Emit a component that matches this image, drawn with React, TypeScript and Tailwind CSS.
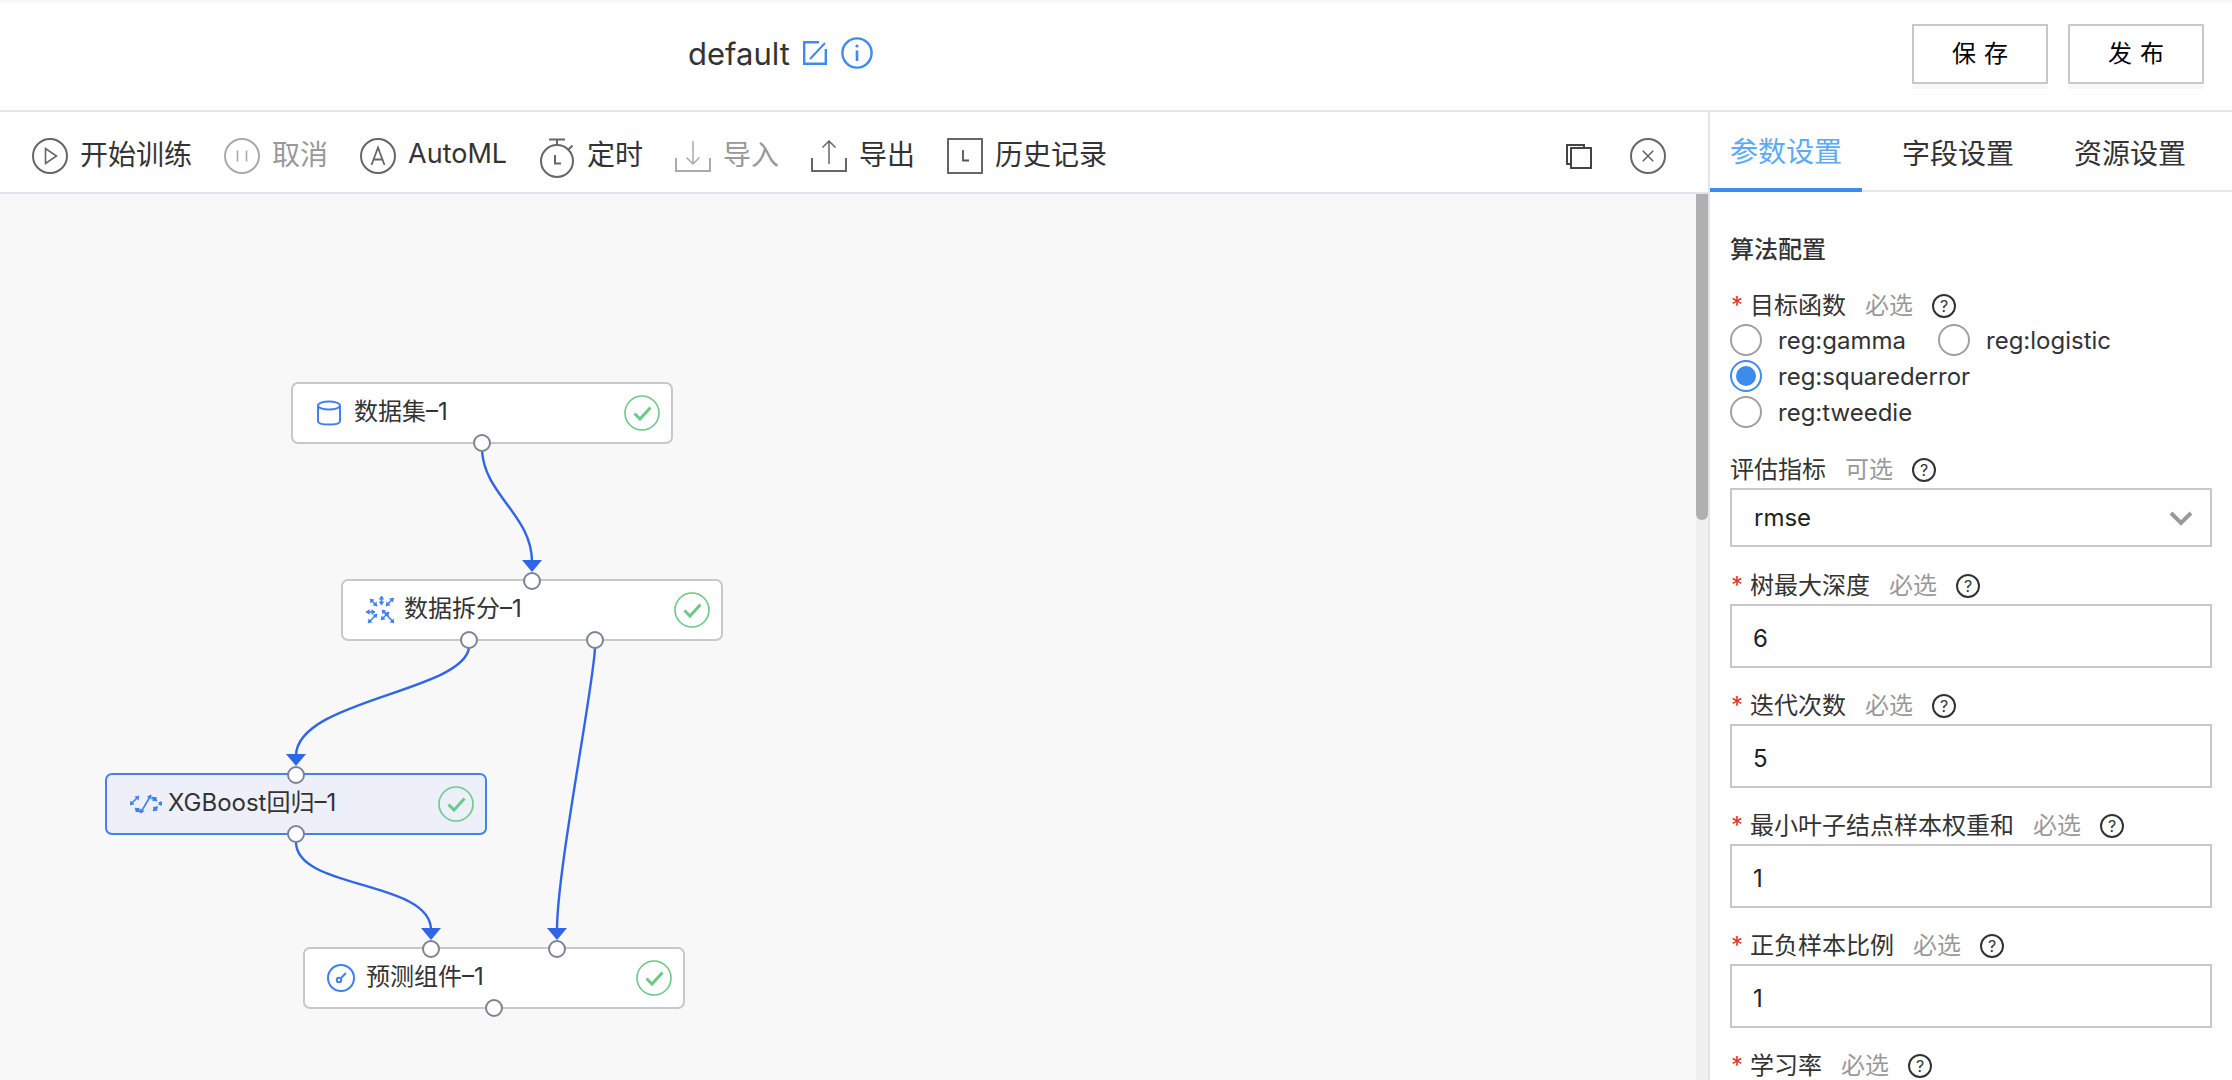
import React from 'react';

const BLUE = '#2f66e8';
const ICON_BLUE = '#3f7ff0';

const font = 'font-[Inter,"Noto_Sans_CJK_SC",sans-serif]';

const PlayIcon = () => (
  <svg width="36" height="36" viewBox="0 0 36 36" fill="none" stroke="#666" strokeWidth="2">
    <circle cx="18" cy="18" r="17" />
    <path d="M13.5 10.5v15l11-7.5z" strokeWidth="1.6" />
  </svg>
);

const PauseIcon = () => (
  <svg width="36" height="36" viewBox="0 0 36 36" fill="none" stroke="#aaa" strokeWidth="2">
    <circle cx="18" cy="18" r="17" />
    <path d="M13.5 12.5v11M22.5 12.5v11" strokeWidth="1.6" />
  </svg>
);

const AutoIcon = () => (
  <svg width="36" height="36" viewBox="0 0 36 36" fill="none" stroke="#666" strokeWidth="2">
    <circle cx="18" cy="18" r="17" />
    <path d="M11.5 27L18 9.5 24.5 27M13.8 21.5h8.4" strokeWidth="1.8" />
  </svg>
);

const TimerIcon = () => (
  <svg className="mt-[3px]" width="36" height="40" viewBox="0 0 36 40" fill="none" stroke="#666" strokeWidth="2">
    <circle cx="18" cy="23" r="16" />
    <path d="M10 1.5h16M18 1.5V7M29.5 11.5l4-4" />
    <path d="M16 17v8.5h6" />
  </svg>
);

const ImportIcon = () => (
  <svg width="36" height="32" viewBox="0 0 36 32" fill="none" stroke="#aaa" strokeWidth="2">
    <path d="M1 18v13h34V18" />
    <path d="M18 1v23M11.5 17.5L18 24l6.5-6.5" strokeWidth="1.5" />
  </svg>
);

const ExportIcon = () => (
  <svg width="36" height="32" viewBox="0 0 36 32" fill="none" stroke="#666" strokeWidth="2">
    <path d="M1 18v13h34V18" />
    <path d="M18 24V1M11.5 7.5L18 1l6.5 6.5" strokeWidth="1.5" />
  </svg>
);

const HistoryIcon = () => (
  <svg width="36" height="36" viewBox="0 0 36 36" fill="none" stroke="#666" strokeWidth="2">
    <rect x="1" y="1" width="34" height="34" />
    <path d="M16 12v10.5h6" strokeWidth="1.8" stroke="#555" />
  </svg>
);

const CopyIcon = () => (
  <svg width="26" height="25" viewBox="0 0 26 25" fill="none" stroke="#444" strokeWidth="2">
    <path d="M4.5 20H1V1h17v3" />
    <rect x="5" y="4" width="20" height="20" />
  </svg>
);

const CloseIcon = () => (
  <svg width="36" height="36" viewBox="0 0 36 36" fill="none" stroke="#666" strokeWidth="2">
    <circle cx="18" cy="18" r="17" />
    <path d="M12.8 12.8l10.4 10.4M23.2 12.8L12.8 23.2" strokeWidth="1.6" />
  </svg>
);

const EditIcon = () => (
  <svg width="24" height="24" viewBox="0 0 24 24" fill="none" stroke="#3d8bec" strokeWidth="2.4">
    <path d="M16 1.2H1.2v21.6h21.6V8" />
    <path d="M22 2L7 18" strokeWidth="2" />
  </svg>
);

const InfoIcon = () => (
  <svg width="32" height="32" viewBox="0 0 32 32" fill="none" stroke="#3d8bec" strokeWidth="2.4">
    <circle cx="16" cy="16" r="14.6" />
    <path d="M16 13.5V24" strokeWidth="2.6" />
    <circle cx="16" cy="9" r="1.6" fill="#3d8bec" stroke="none" />
  </svg>
);

const CheckCircle = () => (
  <svg width="36" height="36" viewBox="0 0 36 36" fill="none" stroke="#6cc98a">
    <circle cx="18" cy="18" r="17" strokeWidth="1.6" />
    <path d="M10.5 18.5l5.5 5.5L26.5 12.5" strokeWidth="3" />
  </svg>
);

const DatabaseIcon = () => (
  <svg width="26" height="26" viewBox="0 0 26 26" fill="none" stroke={ICON_BLUE} strokeWidth="2">
    <ellipse cx="13" cy="5.5" rx="11" ry="4" />
    <path d="M2 5.5V21c0 2 3 3.6 11 3.6S24 23 24 21V5.5" />
  </svg>
);

// tiny double headed arrow, used by the split and xgboost icons
const Arrow = ({ x1, y1, x2, y2 }: { x1: number; y1: number; x2: number; y2: number }) => {
  const a = Math.atan2(y2 - y1, x2 - x1);
  const head = (x: number, y: number, t: number) => {
    const p = (r: number, o: number) => `${x + r * Math.cos(t + o)},${y + r * Math.sin(t + o)}`;
    return `${x},${y} ${p(4.6, Math.PI - 0.7)} ${p(4.6, Math.PI + 0.7)}`;
  };
  return (
    <g>
      <line x1={x1} y1={y1} x2={x2} y2={y2} stroke={ICON_BLUE} strokeWidth="1.6" />
      <polygon points={head(x2, y2, a)} fill={ICON_BLUE} />
      <polygon points={head(x1, y1, a + Math.PI)} fill={ICON_BLUE} />
    </g>
  );
};

const SplitIcon = () => (
  <svg width="28" height="28" viewBox="0 0 28 28">
    <Arrow x1={4} y1={3} x2={11} y2={10} />
    <Arrow x1={15.5} y1={0} x2={15.5} y2={9} />
    <Arrow x1={20} y1={10} x2={27.5} y2={2} />
    <Arrow x1={0} y1={16} x2={9} y2={16} />
    <Arrow x1={2} y1={27} x2={11} y2={18} />
    <Arrow x1={16} y1={14} x2={28} y2={27} />
    <Arrow x1={15} y1={24} x2={23} y2={16} />
  </svg>
);

const RegressionIcon = () => (
  <svg width="32" height="20" viewBox="0 0 32 20">
    <Arrow x1={0} y1={11} x2={9} y2={2} />
    <Arrow x1={10.5} y1={19} x2={21} y2={1} />
    <Arrow x1={5} y1={14} x2={10} y2={18} />
    <Arrow x1={22} y1={3} x2={27} y2={7} />
    <Arrow x1={23} y1={17} x2={27.5} y2={12.5} />
    <Arrow x1={31} y1={7.5} x2={31} y2={11.5} />
  </svg>
);

const GaugeIcon = () => (
  <svg className="-ml-[1px]" width="28" height="28" viewBox="0 0 28 28" fill="none" stroke={ICON_BLUE} strokeWidth="2">
    <circle cx="14" cy="14" r="13" />
    <circle cx="12" cy="16" r="2.2" />
    <path d="M14 14l5-5" />
  </svg>
);

const nodes = [
  {
    label: '数据集–1',
    icon: <DatabaseIcon />,
    box: 'left-[291px] top-[188px] bg-white border-[#c8c8c8]',
    ports: ['left-[190px] bottom-[-10px]'],
  },
  {
    label: '数据拆分–1',
    icon: <SplitIcon />,
    box: 'left-[341px] top-[385px] bg-white border-[#c8c8c8]',
    ports: ['left-[190px] top-[-9px]', 'left-[127px] bottom-[-10px]', 'left-[253px] bottom-[-10px]'],
  },
  {
    label: 'XGBoost回归–1',
    icon: <RegressionIcon />,
    box: 'left-[105px] top-[579px] bg-[#edf0f8] border-[#4680ee]',
    ports: ['left-[190px] top-[-9px]', 'left-[190px] bottom-[-10px]'],
  },
  {
    label: '预测组件–1',
    icon: <GaugeIcon />,
    box: 'left-[303px] top-[753px] bg-white border-[#c8c8c8]',
    ports: ['left-[127px] top-[-9px]', 'left-[253px] top-[-9px]', 'left-[190px] bottom-[-10px]'],
  },
];

const Edges = () => (
  <svg className="absolute inset-0 w-full h-full" viewBox="0 194 1696 886" fill="none">
    <g stroke={BLUE} strokeWidth="2.4">
      <path d="M482 450C484 495 532 515 532 562" />
      <path d="M469 648C462 692 296 700 296 756" />
      <path d="M595 648C593 690 557 870 557 930" />
      <path d="M296 842C296 890 431 880 431 930" />
    </g>
    <g fill={BLUE}>
      <polygon points="522,560 542,560 532,572" />
      <polygon points="286,754 306,754 296,766" />
      <polygon points="421,928 441,928 431,940" />
      <polygon points="547,928 567,928 557,940" />
    </g>
  </svg>
);

const toolItems = [
  { label: '开始训练', icon: <PlayIcon /> },
  { label: '取消', icon: <PauseIcon />, off: true },
  { label: 'AutoML', icon: <AutoIcon />, latin: true },
  { label: '定时', icon: <TimerIcon /> },
  { label: '导入', icon: <ImportIcon />, off: true },
  { label: '导出', icon: <ExportIcon /> },
  { label: '历史记录', icon: <HistoryIcon /> },
];

const Help = () => (
  <span className="flex items-center justify-center w-[24px] h-[24px] rounded-full border-2 border-[#333] text-[16px] leading-none text-[#333]">
    ?
  </span>
);

const FieldLabel = ({ name, hint, required = true }: { name: string; hint: string; required?: boolean }) => (
  <div className="flex items-center h-[36px] text-[24px] leading-none text-[#333]">
    {required && <span className="w-[20px] text-[#e0352b] leading-none pl-[1px]">*</span>}
    <span>{name}</span>
    <span className="ml-[19px] text-[#999]">{hint}</span>
    <span className="ml-[19px]">
      <Help />
    </span>
  </div>
);

const Radio = ({ label, checked, className }: { label: string; checked?: boolean; className?: string }) => (
  <div className={`flex items-center h-[36px] ${className ?? ''}`}>
    {checked ? (
      <span className="flex items-center justify-center w-[32px] h-[32px] rounded-full border-2 border-[#3d8bec]">
        <span className="w-[20px] h-[20px] rounded-full bg-[#3d8bec]" />
      </span>
    ) : (
      <span className="w-[32px] h-[32px] rounded-full border-2 border-[#a0a0a0]" />
    )}
    <span className="ml-[16px] mt-[2px] text-[24px] text-[#333]">{label}</span>
  </div>
);

const numberFields = [
  { name: '树最大深度', value: '6' },
  { name: '迭代次数', value: '5' },
  { name: '最小叶子结点样本权重和', value: '1' },
  { name: '正负样本比例', value: '1' },
];

export default function App() {
  return (
    <div className={`flex flex-col w-[2232px] h-[1080px] overflow-hidden bg-white ${font}`}>
      <header className="flex items-start shrink-0 h-[112px] border-b-2 border-[#e2e6ec] bg-[linear-gradient(#f8f8f8,#fff_6px)]">
        <div className="flex items-center h-[106px] pl-[688px]">
          <span className="text-[31px] leading-none text-[#333] mr-[13px]">default</span>
          <span className="mr-[14px]"><EditIcon /></span>
          <InfoIcon />
        </div>
        <div className="flex gap-[20px] ml-auto mt-[24px] pr-[28px]">
          {['保存', '发布'].map((t) => (
            <button
              key={t}
              className="w-[136px] h-[60px] pl-[8px] border-2 border-[#c8c8c8] bg-white text-[24px] tracking-[8px] text-black shadow-[0_5px_0_#f8f8f8]"
            >
              {t}
            </button>
          ))}
        </div>
      </header>

      <div className="flex flex-1 min-h-0">
        <div className="flex flex-col w-[1710px] shrink-0 border-r-2 border-[#e2e6ec]">
          <div className="flex items-center shrink-0 h-[82px] pt-[8px] pl-[32px] pr-[42px] gap-[32px] border-b-2 border-[#e2e6ec]">
            {toolItems.map((item) => (
              <div key={item.label} className="flex items-center gap-[12px]">
                {item.icon}
                <span
                  className={`-mt-[3px] ${item.latin ? 'text-[27px]' : 'text-[28px]'} ${
                    item.off ? 'text-[#999]' : 'text-[#333]'
                  }`}
                >
                  {item.label}
                </span>
              </div>
            ))}
            <div className="flex items-center gap-[38px] ml-auto">
              <CopyIcon />
              <CloseIcon />
            </div>
          </div>

          <div className="flex flex-1 min-h-0 bg-[#f8f8f8]">
            <div className="relative w-[1696px] shrink-0">
              <Edges />
              {nodes.map((n) => (
                <div key={n.label} className={`absolute flex items-center w-[382px] h-[62px] rounded-[7px] border-2 pl-[23px] pr-[11px] ${n.box}`}>
                  <span className="flex items-center w-[38px] shrink-0">{n.icon}</span>
                  <span className="text-[24px] text-[#333] -mt-[3px]">{n.label}</span>
                  <span className="ml-auto"><CheckCircle /></span>
                  {n.ports.map((p) => (
                    <span
                      key={p}
                      className={`absolute w-[18px] h-[18px] -translate-x-[10px] rounded-full border-2 border-[#7c8494] bg-white ${p}`}
                    />
                  ))}
                </div>
              ))}
            </div>
            <div className="w-[12px] bg-[#f0f0f0]">
              <div className="w-[12px] h-[326px] rounded-b-[6px] bg-[#b0b0b0]" />
            </div>
          </div>
        </div>

        <aside className="flex-1 min-w-0">
          <div className="flex gap-[20px] h-[80px] border-b-2 border-[#e8e8e8] mb-[40px]">
            {['参数设置', '字段设置', '资源设置'].map((t, i) => (
              <div
                key={t}
                className={`flex items-center px-[20px] text-[28px] h-[80px] pt-[3px] ${
                  i === 0 ? 'text-[#5aaaf5] border-b-4 border-[#3d8bec]' : 'text-[#333]'
                }`}
              >
                {t}
              </div>
            ))}
          </div>

          <div className="px-[20px]">
            <div className="flex items-center h-[36px] mb-[20px] text-[24px] font-medium text-[#333]">算法配置</div>

            <FieldLabel name="目标函数" hint="必选" />
            <div className="flex flex-col -mt-[2px] mb-[22px]">
              <div className="flex">
                <Radio label="reg:gamma" className="w-[208px]" />
                <Radio label="reg:logistic" />
              </div>
              <Radio label="reg:squarederror" checked />
              <Radio label="reg:tweedie" />
            </div>

            <FieldLabel name="评估指标" hint="可选" required={false} />
            <div className="flex items-center justify-between h-[59px] mb-[21px] pl-[22px] pr-[17px] border-2 border-[#c8c8c8] text-[24px] text-[#222]">
              <span>rmse</span>
              <svg width="24" height="16" viewBox="0 0 24 16" fill="none" stroke="#999" strokeWidth="4">
                <path d="M2 3l10 10L22 3" />
              </svg>
            </div>

            {numberFields.map((f) => (
              <div key={f.name} className="mb-[20px]">
                <FieldLabel name={f.name} hint="必选" />
                <div className="flex items-center h-[64px] pl-[21px] pt-[5px] border-2 border-[#c8c8c8] text-[24px] text-[#222]">
                  {f.value}
                </div>
              </div>
            ))}

            <FieldLabel name="学习率" hint="必选" />
          </div>
        </aside>
      </div>
    </div>
  );
}
